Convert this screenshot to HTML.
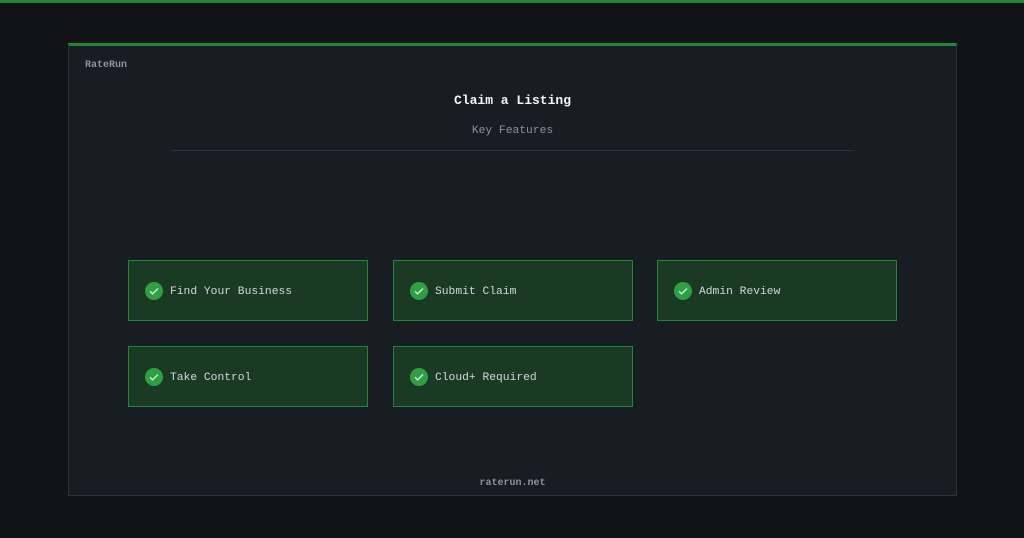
<!DOCTYPE html>
<html><head><style>
*{margin:0;padding:0;box-sizing:border-box}
body{width:1024px;height:538px;background:#111316;position:relative;font-family:"Liberation Mono",monospace;overflow:hidden}
.top{position:absolute;left:0;top:0;width:1024px;height:3px;background:#238636}
.panel{position:absolute;left:68px;top:43px;width:889px;height:453px;background:#181c23;border:1px solid #2d333b;border-top:3px solid #238636}
.brand{position:absolute;left:16px;top:14px;font-size:10px;font-weight:bold;color:#8b949e}
.title{position:absolute;left:0;width:100%;top:47px;text-align:center;font-size:13px;font-weight:bold;color:#f0f6fc}
.sub{position:absolute;left:0;width:100%;top:79px;text-align:center;font-size:11.3px;color:#8b949e}
.hr{position:absolute;left:102px;width:684px;top:104px;height:1px;background:#2d333b}
.card{position:absolute;width:240px;height:61px;background:#1b3a24;border:1px solid #238636;display:flex;align-items:center;padding-left:16px;padding-top:2px;font-size:11.3px;color:#d1d7dd}
.ck{width:18px;height:18px;border-radius:50%;background:#2ea043;margin-right:7px;display:flex;align-items:center;justify-content:center;position:relative;top:-1px}
.foot{position:absolute;left:0;width:100%;top:432px;text-align:center;font-size:10px;font-weight:bold;color:#8b949e}
</style></head><body>
<div class="top"></div>
<div class="panel">
<div class="brand">RateRun</div>
<div class="title">Claim a Listing</div>
<div class="sub">Key Features</div>
<div class="hr"></div>
<div class="foot">raterun.net</div>
</div>
<div class="card" style="left:128px;top:260px"><span class="ck"><svg width="12" height="12" viewBox="0 0 12 12"><path d="M2 6.3l2.6 2.6L10 3.5" fill="none" stroke="#cfe9d4" stroke-width="1.4"/></svg></span>Find Your Business</div>
<div class="card" style="left:393px;top:260px"><span class="ck"><svg width="12" height="12" viewBox="0 0 12 12"><path d="M2 6.3l2.6 2.6L10 3.5" fill="none" stroke="#cfe9d4" stroke-width="1.4"/></svg></span>Submit Claim</div>
<div class="card" style="left:657px;top:260px"><span class="ck"><svg width="12" height="12" viewBox="0 0 12 12"><path d="M2 6.3l2.6 2.6L10 3.5" fill="none" stroke="#cfe9d4" stroke-width="1.4"/></svg></span>Admin Review</div>
<div class="card" style="left:128px;top:346px"><span class="ck"><svg width="12" height="12" viewBox="0 0 12 12"><path d="M2 6.3l2.6 2.6L10 3.5" fill="none" stroke="#cfe9d4" stroke-width="1.4"/></svg></span>Take Control</div>
<div class="card" style="left:393px;top:346px"><span class="ck"><svg width="12" height="12" viewBox="0 0 12 12"><path d="M2 6.3l2.6 2.6L10 3.5" fill="none" stroke="#cfe9d4" stroke-width="1.4"/></svg></span>Cloud+ Required</div>
</body></html>
